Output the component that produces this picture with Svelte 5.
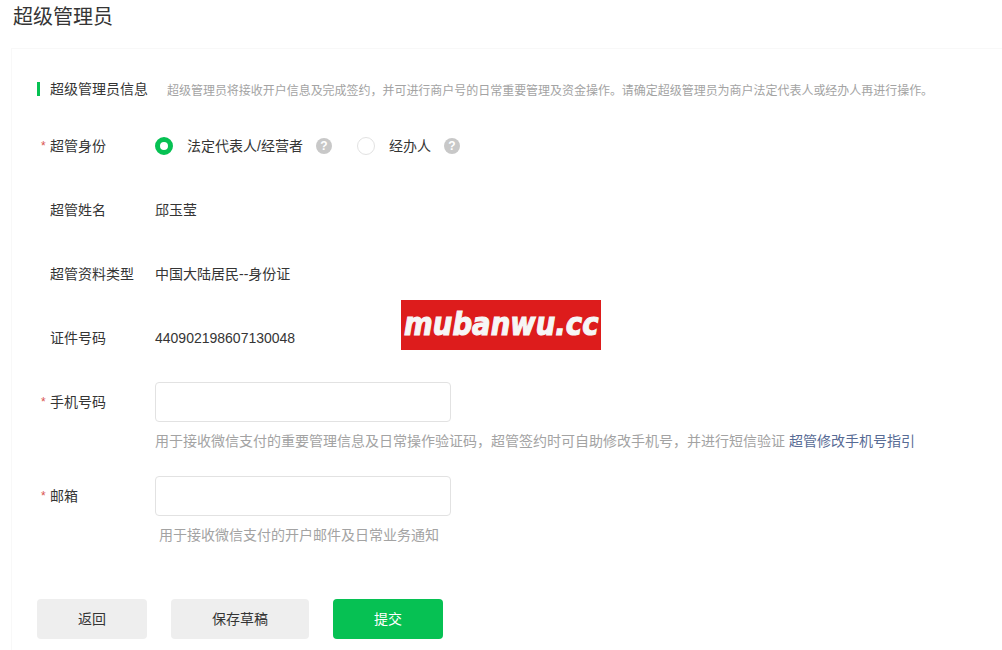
<script>
  const rows = [
    { label: '超管姓名', value: '邱玉莹' },
    { label: '超管资料类型', value: '中国大陆居民--身份证' },
    { label: '证件号码', value: '440902198607130048' }
  ];
</script>

<div class="page">
  <h1>超级管理员</h1>

  <div class="card">
    <div class="section-head">
      <h2>超级管理员信息</h2>
      <p>超级管理员将接收开户信息及完成签约，并可进行商户号的日常重要管理及资金操作。请确定超级管理员为商户法定代表人或经办人再进行操作。</p>
    </div>

    <div class="row">
      <div class="label required">超管身份</div>
      <div class="control radios">
        <span class="radio radio--on"></span>
        <span class="radio-text">法定代表人/经营者</span>
        <span class="tip">?</span>
        <span class="radio radio--second"></span>
        <span class="radio-text">经办人</span>
        <span class="tip">?</span>
      </div>
    </div>

    {#each rows as row}
      <div class="row">
        <div class="label">{row.label}</div>
        <div class="control">{row.value}</div>
      </div>
    {/each}

    <div class="row">
      <div class="label required">手机号码</div>
      <div class="control">
        <input type="text" />
      </div>
      <div class="help">
        用于接收微信支付的重要管理信息及日常操作验证码，超管签约时可自助修改手机号，并进行短信验证 <a href="#guide">超管修改手机号指引</a>
      </div>
    </div>

    <div class="row">
      <div class="label required">邮箱</div>
      <div class="control">
        <input type="text" />
      </div>
      <div class="help help--indent">用于接收微信支付的开户邮件及日常业务通知</div>
    </div>

    <div class="actions">
      <button class="btn btn--back">返回</button>
      <button class="btn btn--draft">保存草稿</button>
      <button class="btn btn--primary">提交</button>
    </div>
  </div>

  <div class="watermark"><span>mubanwu.cc</span></div>
</div>

<style>
  :global(body) {
    margin: 0;
    background: #fff;
  }

  .page {
    position: relative;
    height: 650px;
    overflow: hidden;
    font-family: "Liberation Sans", "Noto Sans CJK SC", sans-serif;
    font-size: 14px;
    color: #353535;
  }

  h1 {
    margin: 0;
    padding: 0 0 0 13px;
    height: 48px;
    line-height: 35px;
    font-size: 20px;
    font-weight: 400;
    color: #353535;
  }

  .card {
    margin: 0 0 0 11px;
    padding: 33px 0 0 25px;
    height: 640px;
    box-sizing: border-box;
    border: 1px solid #f8f8f8;
    border-width: 1px 0 0 1px;
  }

  .section-head {
    display: flex;
    align-items: center;
    height: 14px;
    margin-bottom: 18px;
    border-left: 3px solid #06c153;
    padding-left: 10px;
  }

  h2 {
    margin: 0;
    font-size: 14px;
    font-weight: 400;
    line-height: 14px;
    color: #353535;
  }

  .section-head p {
    margin: 0 0 0 19px;
    font-size: 12px;
    letter-spacing: -0.03px;
    color: #a3a3a3;
    white-space: nowrap;
  }

  .row {
    display: grid;
    grid-template-columns: 118px 1fr;
    padding: 12px 0;
    align-items: center;
  }

  .label {
    padding-left: 13px;
    position: relative;
    line-height: 40px;
    color: #353535;
  }

  .required::before {
    content: "*";
    position: absolute;
    left: 4px;
    top: 0;
    color: #d9534f;
    font-size: 12px;
  }

  .control {
    min-height: 40px;
    line-height: 40px;
    display: flex;
    align-items: center;
  }

  .radio {
    width: 18px;
    height: 18px;
    box-sizing: border-box;
    border: 1px solid #e2e2e2;
    border-radius: 50%;
    background: #fff;
    flex: none;
  }

  .radio--on {
    border: 5px solid #06c153;
  }

  .radio--second {
    margin-left: 25px;
  }

  .radio-text {
    margin-left: 14px;
  }

  .tip {
    width: 16px;
    height: 16px;
    margin-left: 13px;
    border-radius: 50%;
    background: #c8c8c8;
    color: #fff;
    font-size: 12px;
    font-weight: 700;
    line-height: 16px;
    text-align: center;
    flex: none;
  }

  input {
    display: block;
    width: 296px;
    height: 40px;
    box-sizing: border-box;
    border: 1px solid #e2e2e2;
    border-radius: 4px;
    background: #fff;
    outline: none;
  }

  .help {
    grid-column: 2;
    margin-top: 8px;
    line-height: 22px;
    font-size: 14px;
    color: #a3a3a3;
    white-space: nowrap;
  }

  .help a {
    color: #576b95;
    text-decoration: none;
  }

  .help--indent {
    padding-left: 4px;
  }

  .actions {
    display: flex;
    gap: 24px;
    margin-top: 41px;
  }

  .btn {
    height: 40px;
    border: 0;
    border-radius: 4px;
    background: #eeeeee;
    color: #353535;
    font: inherit;
    padding: 0 0 2px;
  }

  .btn--back,
  .btn--primary {
    width: 110px;
  }

  .btn--draft {
    width: 138px;
  }

  .btn--primary {
    background: #06c153;
    color: #fff;
  }

  .watermark {
    position: absolute;
    left: 401px;
    top: 300px;
    width: 200px;
    height: 50px;
    background: #dd1c1c;
    color: #f6f6f6;
    font-family: "DejaVu Sans", sans-serif;
    font-size: 27px;
    font-style: italic;
    font-weight: 700;
    line-height: 50px;
    text-align: center;
    white-space: nowrap;
    -webkit-text-stroke: 1px #f6f6f6;
  }

  .watermark span {
    display: inline-block;
    transform: scale(1.02, 1.15);
  }
</style>
